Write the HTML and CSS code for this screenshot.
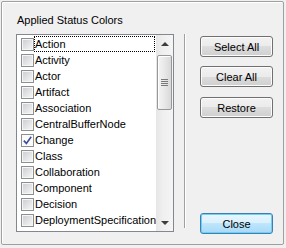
FILE: index.html
```html
<!DOCTYPE html>
<html lang="en">

<head>
    <meta charset="UTF-8">
    <title>Applied Status Colors</title>
    <link rel="stylesheet" href="styles.css">
</head>

<body>
    <div class="dialog">
        <div class="title">Applied Status Colors</div>
        <div class="main">
            <div class="list">
                <div class="items">
                    <div class="item"><span class="box"></span><span class="label focus">Action</span></div>
                    <div class="item"><span class="box"></span><span class="label">Activity</span></div>
                    <div class="item"><span class="box"></span><span class="label">Actor</span></div>
                    <div class="item"><span class="box"></span><span class="label">Artifact</span></div>
                    <div class="item"><span class="box"></span><span class="label">Association</span></div>
                    <div class="item"><span class="box"></span><span class="label">CentralBufferNode</span></div>
                    <div class="item">
                        <span class="box checked">
                            <svg width="9" height="9" viewBox="0 0 9 9"><path d="M0.8 4.6 L3.4 7.4 L8.2 0.8" fill="none" stroke="#3b4f9a" stroke-width="1.6"/></svg>
                        </span>
                        <span class="label">Change</span>
                    </div>
                    <div class="item"><span class="box"></span><span class="label">Class</span></div>
                    <div class="item"><span class="box"></span><span class="label">Collaboration</span></div>
                    <div class="item"><span class="box"></span><span class="label">Component</span></div>
                    <div class="item"><span class="box"></span><span class="label">Decision</span></div>
                    <div class="item"><span class="box"></span><span class="label">DeploymentSpecification</span></div>
                </div>
                <div class="scroll">
                    <div class="arrow"><span class="tri-up"></span></div>
                    <div class="track">
                        <div class="thumb"><span class="grip"></span></div>
                    </div>
                    <div class="arrow"><span class="tri-down"></span></div>
                </div>
            </div>
            <div class="sep"></div>
            <div class="buttons">
                <button class="btn">Select All</button>
                <button class="btn">Clear All</button>
                <button class="btn restore">Restore</button>
                <button class="btn close">Close</button>
            </div>
        </div>
    </div>
</body>

</html>
```

FILE: styles.css
```css
body {
    margin: 0;
    background-color: #f0f0f0;
    font-family: "Liberation Sans", Arial, sans-serif;
    font-size: 11px;
    color: #000;
}

.dialog {
    margin: 1px 0 0 1px;
    width: 283px;
    height: 244px;
    box-sizing: border-box;
    border: 1px solid #a0a0a0;
    border-radius: 2px;
    box-shadow: inset 1px 1px 0 #fff;
    padding: 11px 0 0 14px;
}

.title {
    line-height: 14px;
    margin-left: 1px;
    margin-bottom: 7px;
}

.main {
    display: flex;
    align-items: flex-start;
}

/* List box */
.list {
    width: 158px;
    height: 198px;
    box-sizing: border-box;
    border: 1px solid #828790;
    background-color: #fff;
    display: flex;
}

.items {
    flex: 1;
    padding-top: 1px;
    overflow: hidden;
}

.item {
    height: 16px;
    display: flex;
    align-items: center;
    padding-left: 4px;
    white-space: nowrap;
}

.box {
    flex: none;
    width: 13px;
    height: 13px;
    box-sizing: border-box;
    border: 1px solid #8e8f8f;
    padding: 1px;
    background: linear-gradient(135deg, #cdd0d4, #f4f4f4) content-box, #f6f6f6;
    display: flex;
}

.box.checked {
    background: #fbfbfb;
}

.label {
    flex: 1;
    height: 16px;
    box-sizing: border-box;
    border: 1px dotted transparent;
    line-height: 14px;
    margin-right: 1px;
}

.label.focus {
    border-color: #000;
}

/* Scroll bar */
.scroll {
    width: 17px;
    display: flex;
    flex-direction: column;
    background: linear-gradient(to right, #e6e6e6, #efefef 40%, #f5f5f5);
}

.arrow {
    height: 17px;
    display: flex;
    align-items: center;
    justify-content: center;
}

.tri-up {
    border-left: 4px solid transparent;
    border-right: 4px solid transparent;
    border-bottom: 4px solid #3d3d3d;
}

.tri-down {
    border-left: 4px solid transparent;
    border-right: 4px solid transparent;
    border-top: 4px solid #3d3d3d;
}

.track {
    flex: 1;
    padding-top: 3px;
}

.thumb {
    width: 15px;
    height: 55px;
    margin-left: 1px;
    box-sizing: border-box;
    border: 1px solid #979797;
    border-radius: 2px;
    background: linear-gradient(to right, #f4f4f4, #e8e8e8 50%, #d8d8d8);
    box-shadow: inset 1px 1px 0 #fff;
    display: flex;
    align-items: center;
    justify-content: center;
}

.grip {
    width: 7px;
    height: 7px;
    background: linear-gradient(#7a7a7a 1px, transparent 1px);
    background-size: 7px 2px;
}

/* Separator */
.sep {
    width: 1px;
    height: 194px;
    margin-left: 10px;
    background-color: #a0a0a0;
    border-right: 1px solid #fff;
}

/* Buttons */
.buttons {
    width: 73px;
    height: 198px;
    margin: 2px 0 0 14px;
    display: flex;
    flex-direction: column;
}

.btn {
    height: 21px;
    padding: 0;
    font-family: "Liberation Sans", Arial, sans-serif;
    font-size: 11px;
    color: #000;
    border: 1px solid #707070;
    border-radius: 3px;
    background: linear-gradient(#f2f2f2 0%, #ebebeb 50%, #dddddd 50%, #cfcfcf 100%);
    box-shadow: inset 0 0 0 1px #fcfcfc;
}

.btn + .btn {
    margin-top: 9px;
}

.btn.restore {
    margin-top: 10px;
}

.btn.close {
    margin-top: auto;
    border-color: #3c7fb1;
    background: linear-gradient(#eaf6fd 0%, #d9f0fc 50%, #bee6fd 50%, #a7d9f5 100%);
    box-shadow: inset 0 0 0 1px #6fd0f6;
}
```
